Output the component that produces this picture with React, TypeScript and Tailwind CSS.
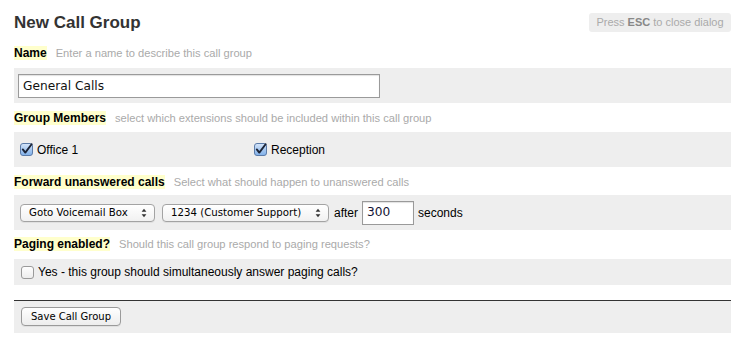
import React from "react";

const sans = { fontFamily: '"Liberation Sans", Arial, sans-serif' };
const lucida = { fontFamily: '"DejaVu Sans", Verdana, sans-serif' };

function CheckBox({ checked }: { checked: boolean }) {
  return (
    <svg width="13" height="13" viewBox="0 0 13 13" className="shrink-0">
      <defs>
        <linearGradient id={checked ? "cbOn" : "cbOff"} x1="0" y1="0" x2="0" y2="1">
          {checked ? (
            <>
              <stop offset="0" stopColor="#d6e6fa" />
              <stop offset="0.5" stopColor="#a9c9f0" />
              <stop offset="1" stopColor="#7fb0ea" />
            </>
          ) : (
            <>
              <stop offset="0" stopColor="#ffffff" />
              <stop offset="1" stopColor="#ececec" />
            </>
          )}
        </linearGradient>
      </defs>
      <rect
        x="0.5"
        y="0.5"
        width="12"
        height="12"
        rx="2.5"
        fill={checked ? "url(#cbOn)" : "url(#cbOff)"}
        stroke={checked ? "#5b7ba8" : "#9a9a9a"}
      />
      {checked && (
        <path
          d="M2.8 6.4 L5.3 9.6 L11.6 1.2"
          fill="none"
          stroke="#1c2436"
          strokeWidth="1.9"
          strokeLinecap="round"
          strokeLinejoin="round"
        />
      )}
    </svg>
  );
}

function Label({ title, hint }: { title: string; hint: string }) {
  return (
    <div className="flex items-center h-[14px]" style={sans}>
      <span className="bg-[#ffffcc] text-[12px] font-bold text-black leading-[14px] px-0">{title}</span>
      <span className="ml-[9px] text-[11.15px] text-[#aaaaaa] leading-[13px]">{hint}</span>
    </div>
  );
}

function Select({ label, width }: { label: string; width: number }) {
  return (
    <div
      className="h-[18px] flex items-center justify-between border border-[#a3a3a3] rounded-[4px] bg-gradient-to-b from-white to-[#f1f1f1] pl-[8px] pr-[7px] text-[10.2px] text-black shadow-[0_1px_0_rgba(0,0,0,0.06)]"
      style={{ ...lucida, width }}
    >
      <span>{label}</span>
      <svg width="6" height="10" viewBox="0 0 6 10">
        <path d="M3 0.8 L5.4 3.8 L0.6 3.8 Z" fill="#333" />
        <path d="M3 9.2 L5.4 6.2 L0.6 6.2 Z" fill="#333" />
      </svg>
    </div>
  );
}

export default function App() {
  return (
    <div className="w-[744px] h-[348px] bg-white pl-[14px] pr-[13px] overflow-hidden">
      <div className="pt-[13px] flex justify-between items-start">
        <h1 className="text-[17px] font-bold text-[#333333] leading-[20px]" style={sans}>
          New Call Group
        </h1>
        <div
          className="h-[19px] w-[142px] flex items-center justify-center bg-[#eeeeee] rounded-[3px] text-[11px] text-[#aaaaaa]"
          style={sans}
        >
          Press&nbsp;<b className="text-[#888888]">ESC</b>&nbsp;to close dialog
        </div>
      </div>

      <div className="mt-[13px]">
        <Label title="Name" hint="Enter a name to describe this call group" />
      </div>
      <div className="mt-[8px] h-[35px] bg-[#eeeeee] pl-[4px] pt-[6px]">
        <div
          className="w-[362px] h-[24px] border border-[#9a9a9a] bg-white flex items-center pl-[4px] text-[12.2px] text-[#111111] shadow-[inset_0_1px_1px_rgba(0,0,0,0.12)]"
          style={lucida}
        >
          General Calls
        </div>
      </div>

      <div className="mt-[8px]">
        <Label title="Group Members" hint="select which extensions should be included within this call group" />
      </div>
      <div className="mt-[7px] h-[35px] bg-[#eeeeee] flex items-center pl-[6px] text-[12px] text-black" style={sans}>
        <div className="w-[234px] flex items-center gap-[4px]">
          <CheckBox checked />
          <span>Office 1</span>
        </div>
        <div className="flex items-center gap-[4px]">
          <CheckBox checked />
          <span>Reception</span>
        </div>
      </div>

      <div className="mt-[8px]">
        <Label title="Forward unanswered calls" hint="Select what should happen to unanswered calls" />
      </div>
      <div className="mt-[6px] h-[35px] bg-[#eeeeee] flex items-center pl-[6px] text-[12px] text-black" style={sans}>
        <Select label="Goto Voicemail Box" width={135} />
        <div className="ml-[7px]">
          <Select label="1234 (Customer Support)" width={167} />
        </div>
        <span className="ml-[5px]">after</span>
        <div
          className="ml-[4px] w-[52px] h-[24px] border border-[#9a9a9a] bg-white flex items-center pl-[4px] text-[12.2px] text-[#111133] shadow-[inset_0_1px_1px_rgba(0,0,0,0.12)]"
          style={lucida}
        >
          300
        </div>
        <span className="ml-[4px]">seconds</span>
      </div>

      <div className="mt-[7px]">
        <Label title="Paging enabled?" hint="Should this call group respond to paging requests?" />
      </div>
      <div className="mt-[8px] h-[26px] bg-[#eeeeee] flex items-center pl-[7px] gap-[4px] text-[12px] text-black" style={sans}>
        <CheckBox checked={false} />
        <span>Yes - this group should simultaneously answer paging calls?</span>
      </div>

      <div className="mt-[15px] border-t border-[#333333] h-[33px] bg-[#eeeeee] pl-[7px] pt-[6px]">
        <button
          className="w-[100px] h-[19px] border border-[#9a9a9a] rounded-[4px] bg-gradient-to-b from-white to-[#ededed] text-[10px] text-black flex items-center justify-center shadow-[0_1px_0_rgba(0,0,0,0.06)]"
          style={lucida}
        >
          Save Call Group
        </button>
      </div>
    </div>
  );
}
